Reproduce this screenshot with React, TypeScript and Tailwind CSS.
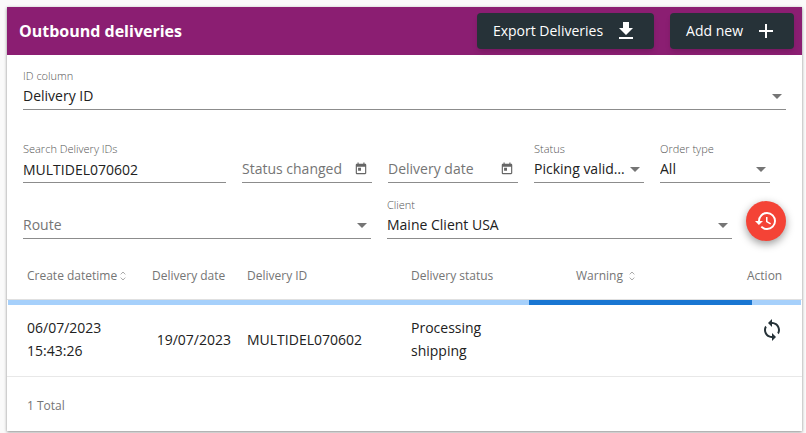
import React, { useState } from "react";
import {
  MdAdd,
  MdArrowDropDown,
  MdGetApp,
  MdHistory,
  MdSync,
  MdToday,
} from "react-icons/md";

interface FieldProps {
  id: string;
  label: string;
  className: string;
  floating?: boolean;
  children: React.ReactNode;
}

// The label floats above a filled field and rests on the line of an empty one
const Field: React.FC<FieldProps> = ({
  id,
  label,
  className,
  floating = true,
  children,
}) => (
  <div className={`relative min-w-0 pt-4 ${className}`}>
    <label
      htmlFor={id}
      className={
        floating
          ? "absolute top-0 left-0 text-[11px] leading-4 font-light whitespace-nowrap text-[#555]"
          : "pointer-events-none absolute top-4 left-0 leading-6 whitespace-nowrap text-[#757575]"
      }
    >
      {label}
    </label>
    <div className="relative flex h-[26px] items-start border-b border-[#8c8c8c]">
      {children}
    </div>
  </div>
);

interface SelectFieldProps {
  id: string;
  label: string;
  className: string;
  options: string[];
}

const SelectField: React.FC<SelectFieldProps> = ({
  id,
  label,
  className,
  options,
}) => (
  <Field
    id={id}
    label={label}
    className={className}
    floating={options.length > 0}
  >
    <select
      id={id}
      className="h-6 w-full appearance-none bg-transparent pr-[18px] text-ellipsis outline-none"
    >
      {options.map((option) => (
        <option key={option}>{option}</option>
      ))}
    </select>
    <MdArrowDropDown className="pointer-events-none absolute -right-[3px] size-6 text-[#757575]" />
  </Field>
);

interface DateFieldProps {
  id: string;
  label: string;
}

const DateField: React.FC<DateFieldProps> = ({ id, label }) => {
  const [value, setValue] = useState<string>("");

  return (
    <Field
      id={id}
      label={label}
      className="flex-[130]"
      floating={value !== ""}
    >
      <input
        id={id}
        type="text"
        value={value}
        onChange={(e) => setValue(e.target.value)}
        className="h-6 w-full min-w-0 outline-none"
      />
      <button
        type="button"
        aria-label="Open calendar"
        className="mr-1 flex h-6 items-center"
      >
        <MdToday className="size-[14px] text-[#666]" />
      </button>
    </Field>
  );
};

const SortIcon = () => (
  <svg
    viewBox="0 0 6 10"
    className="h-[10px] w-[6px] fill-none stroke-[#aaa]"
    aria-hidden="true"
  >
    <path d="M.7 3.4 3 1l2.3 2.4M.7 6.6 3 9l2.3-2.4" />
  </svg>
);

const App: React.FC = () => {
  const [search, setSearch] = useState<string>("MULTIDEL070602");

  return (
    <div className="min-h-screen bg-[#fafafa] pt-[7px] pr-1 pl-[7px] font-['Open_Sans',sans-serif] text-sm text-[#212121]">
      <main className="bg-white shadow-[0_1px_3px_rgba(0,0,0,0.45)]">
        <header className="flex h-12 items-center gap-4 bg-[#8b1e72] pr-2 pl-3 text-white">
          <h1 className="flex-1 text-base font-bold">Outbound deliveries</h1>
          <button
            type="button"
            className="flex h-9 items-center gap-[11px] rounded bg-[#263238] px-4 shadow-md"
          >
            Export Deliveries
            <MdGetApp className="size-6" />
          </button>
          <button
            type="button"
            className="flex h-9 items-center gap-[11px] rounded bg-[#263238] px-4 shadow-md"
          >
            Add new
            <MdAdd className="size-6" />
          </button>
        </header>

        <form className="px-4 pt-[13px]" onSubmit={(e) => e.preventDefault()}>
          <SelectField
            id="id-column"
            label="ID column"
            className="w-full"
            options={["Delivery ID"]}
          />
          <div className="mt-[31px] flex gap-4 pr-4">
            <Field id="search" label="Search Delivery IDs" className="flex-[203]">
              <input
                id="search"
                type="text"
                value={search}
                onChange={(e) => setSearch(e.target.value)}
                className="h-6 w-full outline-none"
              />
            </Field>
            <DateField id="status-changed" label="Status changed" />
            <DateField id="delivery-date" label="Delivery date" />
            <SelectField
              id="status"
              label="Status"
              className="flex-[110]"
              options={["Picking validated"]}
            />
            <SelectField
              id="order-type"
              label="Order type"
              className="flex-[110]"
              options={["All"]}
            />
          </div>
          <div className="mt-[14px] flex items-end gap-[14px]">
            <div className="flex flex-1 gap-4">
              <SelectField
                id="route"
                label="Route"
                className="flex-[348]"
                options={[]}
              />
              <SelectField
                id="client"
                label="Client"
                className="flex-[345]"
                options={["Maine Client USA"]}
              />
            </div>
            <button
              type="button"
              aria-label="Reset filters"
              className="mb-[-2px] flex size-10 items-center justify-center rounded-full bg-[#f44336] text-white shadow-[0_3px_8px_rgba(0,0,0,0.4)]"
            >
              <MdHistory className="size-6" />
            </button>
          </div>
        </form>

        <table className="mt-3 w-full table-fixed border-collapse text-left">
          <colgroup>
            <col className="w-[129px]" />
            <col className="w-[95px]" />
            <col className="w-[164px]" />
            <col className="w-[165px]" />
            <col />
            <col className="w-[71px]" />
          </colgroup>
          <thead>
            <tr className="h-12 border-b border-[#e0e0e0] text-xs whitespace-nowrap text-[#757575]">
              <th className="pt-0.5 pl-5 font-normal">
                <button type="button" className="flex items-center gap-[3px]">
                  Create datetime
                  <SortIcon />
                </button>
              </th>
              <th className="pt-0.5 pl-4 font-normal">Delivery date</th>
              <th className="pt-0.5 pl-4 font-normal">Delivery ID</th>
              <th className="pt-0.5 pl-4 font-normal">Delivery status</th>
              <th className="pt-0.5 pl-4 font-normal">
                <button type="button" className="flex items-center gap-[6px]">
                  Warning
                  <SortIcon />
                </button>
              </th>
              <th className="pt-0.5 pl-4 font-normal">Action</th>
            </tr>
          </thead>
          <tbody>
            <tr>
              <td colSpan={6} className="px-px">
                <div
                  role="progressbar"
                  aria-label="Loading deliveries"
                  className="flex h-[5px] bg-[#a6d0fb]"
                >
                  <div className="flex-[521]" />
                  <div className="flex-[223] bg-[#1976d2]" />
                  <div className="flex-[49]" />
                </div>
              </td>
            </tr>
            <tr className="h-[72px] border-b border-[#e8e8e8] leading-[23px]">
              <td className="pb-0.5 pl-5">06/07/2023 15:43:26</td>
              <td className="pb-0.5 text-right">19/07/2023</td>
              <td className="pb-0.5 pl-4">MULTIDEL070602</td>
              <td className="pr-12 pb-0.5 pl-4">Processing shipping</td>
              <td />
              <td className="pt-[13px] pr-[18px] align-top">
                <button
                  type="button"
                  aria-label="Sync delivery"
                  className="ml-auto block"
                >
                  <MdSync className="size-6 text-[#263238]" />
                </button>
              </td>
            </tr>
          </tbody>
        </table>
        <footer className="flex h-[54px] items-center px-5 pt-1 text-xs text-[#757575]">
          1 Total
        </footer>
      </main>
    </div>
  );
};

export default App;
